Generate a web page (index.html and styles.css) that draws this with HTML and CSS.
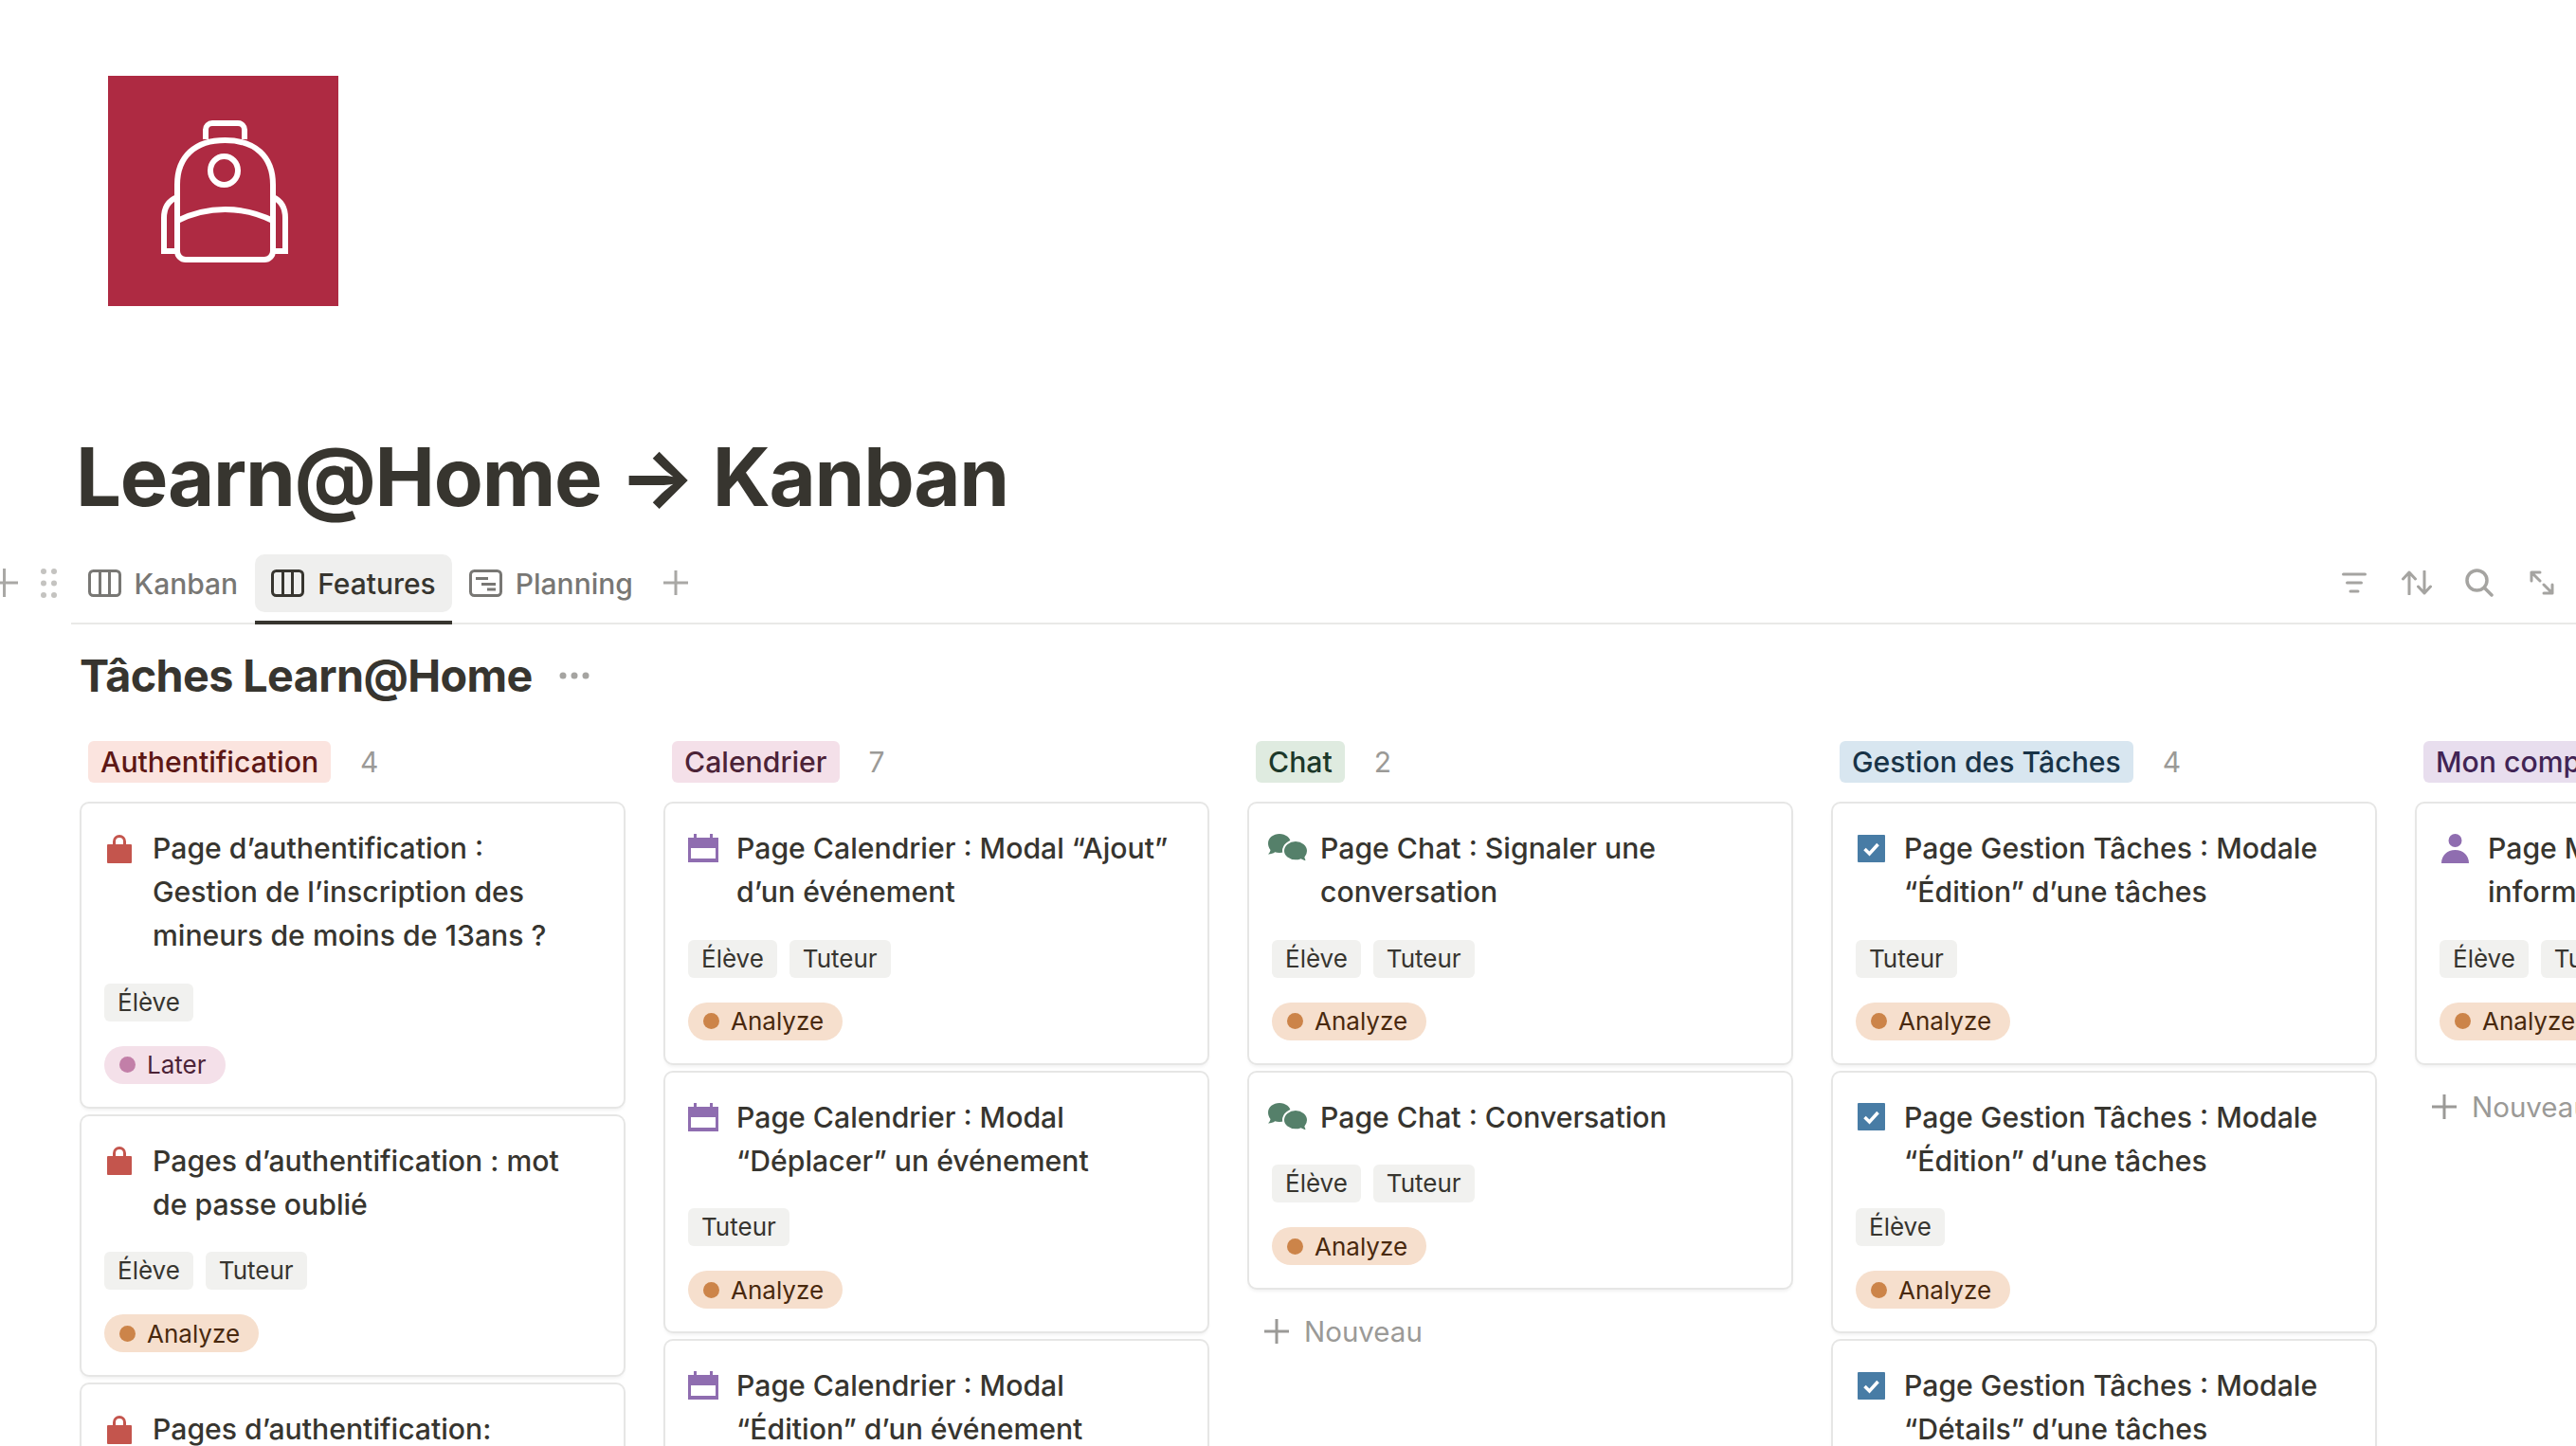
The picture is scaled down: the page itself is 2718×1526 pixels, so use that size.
FILE: index.html
```html
<!DOCTYPE html>
<html lang="fr">
    <head>
        <meta charset="UTF-8">
        <title>Learn@Home → Kanban</title>
        <link rel="stylesheet" href="styles.css">
    </head>
    <body>
        <svg class="sprites" width="0" height="0">
            <symbol id="i-board" viewBox="0 0 35 29"><rect x="1.5" y="1.5" width="32" height="26" rx="4" fill="none" stroke="currentColor" stroke-width="3"/><path d="M12.5 2V27M22.5 2V27" stroke="currentColor" stroke-width="3"/></symbol>
            <symbol id="i-timeline" viewBox="0 0 35 29"><rect x="1.5" y="1.5" width="32" height="26" rx="4" fill="none" stroke="currentColor" stroke-width="3"/><path d="M7 9.5H20M13 15.5H28M19 21H28" stroke="currentColor" stroke-width="3"/></symbol>
            <symbol id="i-lock" viewBox="0 0 26 31"><path d="M7.5 12V8a5.5 5.5 0 0 1 11 0v4" fill="none" stroke="currentColor" stroke-width="3"/><rect y="11" width="26" height="20" rx="1" fill="currentColor"/></symbol>
            <symbol id="i-cal" viewBox="0 0 32 30"><path d="M6 0h3v4h14V0h3v4h6v26H0V4h6zM3 15v11h26V15z" fill="currentColor"/></symbol>
            <symbol id="i-chat" viewBox="0 0 43 30"><path d="M12 0c6.500 0 12 4.300 12 10s-5.500 10-12 10c-1.800 0-3.300-.3-4.800-.8C5.500 20.500 3 21.300 0 21.500c1.300-1.200 2.200-2.600 2.500-4.500C1 15.200 0 12.800 0 10 0 4.300 5.500 0 12 0z" fill="currentColor"/><path d="M29 7c7 0 13 4.800 13 11 0 2.700-1 5-2.600 6.800.3 1.800 1.400 3.500 3.100 4.700-3 0-5.900-.8-8-2.100-1.700.6-3.500.9-5.500.9-7 0-13-4.600-13-10.300C16 11.800 22 7 29 7z" fill="currentColor" stroke="#fff" stroke-width="2"/></symbol>
            <symbol id="i-check" viewBox="0 0 29 29"><rect width="29" height="29" rx="1" fill="currentColor"/><path d="M7.500 15l5 5 9-10" fill="none" stroke="#fff" stroke-width="3.500"/></symbol>
            <symbol id="i-person" viewBox="0 0 29 31"><circle cx="14.500" cy="7" r="7" fill="currentColor"/><path d="M0 31c0-8 6-14 14.500-14S29 23 29 31z" fill="currentColor"/></symbol>
            <symbol id="i-plus" viewBox="0 0 26 26"><path d="M13 0V26M0 13H26" stroke="currentColor" stroke-width="3"/></symbol>
        </svg>

        <div class="page-icon">
            <svg width="243" height="242" viewBox="0 0 243 242" fill="none" stroke="#fff" stroke-width="6">
                <path d="M103 67V57a7 7 0 0 1 7-7H137a7 7 0 0 1 7 7V67"/>
                <path d="M73 185V115C73 85 92 68 123.500 68S174 85 174 115V185a9 9 0 0 1-9 9H82a9 9 0 0 1-9-9Z"/>
                <ellipse cx="122.500" cy="100" rx="14.500" ry="15"/>
                <path d="M73 128C63 132 59 140 59 150V185H71M174 128C183 132 187 140 187 150V185H176"/>
                <path d="M73 153C105 137 142 137 174 153"/>
            </svg>
        </div>

        <h1 class="page-title">Learn@Home → Kanban</h1>

        <div class="tabs-row">
            <div class="gutter">
                <svg class="gutter-plus" width="26" height="30" viewBox="0 0 26 30"><path d="M11.500 0V30M-4 15H26" stroke="currentColor" stroke-width="3"/></svg>
                <svg class="grip" width="17" height="32" viewBox="0 0 17 32" fill="currentColor"><circle cx="3" cy="3" r="3"/><circle cx="14" cy="3" r="3"/><circle cx="3" cy="15.500" r="3"/><circle cx="14" cy="15.500" r="3"/><circle cx="3" cy="28" r="3"/><circle cx="14" cy="28" r="3"/></svg>
            </div>
            <div class="tabs">
                <div class="tab"><div class="tab-inner"><svg width="35" height="29"><use href="#i-board"/></svg>Kanban</div></div>
                <div class="tab active"><div class="tab-inner"><svg width="35" height="29"><use href="#i-board"/></svg>Features</div></div>
                <div class="tab"><div class="tab-inner"><svg width="35" height="29"><use href="#i-timeline"/></svg>Planning</div></div>
                <svg class="tab-add" width="26" height="26"><use href="#i-plus"/></svg>
                <div class="tools">
                    <span class="tool"><svg width="26" height="22" viewBox="0 0 26 22" stroke="currentColor" stroke-width="3" stroke-linecap="round"><path d="M1.500 2H24.500M5.500 11H20.500M9 20H17"/></svg></span>
                    <span class="tool"><svg width="32" height="26" viewBox="0 0 32 26" fill="none" stroke="currentColor" stroke-width="3" stroke-linecap="round" stroke-linejoin="round"><path d="M8 25V2M1.500 9L8 2L14.500 9M24 1V24M17.500 17L24 24L30.500 17"/></svg></span>
                    <span class="tool"><svg width="30" height="30" viewBox="0 0 30 30" fill="none" stroke="currentColor" stroke-width="3.500" stroke-linecap="round"><circle cx="12.500" cy="12.500" r="10.500"/><path d="M20.500 20.500L28 28"/></svg></span>
                    <span class="tool"><svg width="26" height="26" viewBox="0 0 26 26" fill="none" stroke="currentColor" stroke-width="3" stroke-linecap="round" stroke-linejoin="round"><path d="M2 11V2H11M2 2L11 11M24 15V24H15M24 24L15 15"/></svg></span>
                </div>
            </div>
        </div>

        <div class="db-head">
            <h2>Tâches Learn@Home</h2>
            <svg class="db-more" width="32" height="8" viewBox="0 0 32 8" fill="currentColor"><circle cx="4" cy="4" r="3.500"/><circle cx="16" cy="4" r="3.500"/><circle cx="28" cy="4" r="3.500"/></svg>
        </div>

        <div class="board">
            <div class="column">
                <div class="col-head"><span class="col-label red">Authentification</span><span class="col-count">4</span></div>
                <div class="card">
                    <div class="card-title"><span class="card-icon c-red lock"><svg width="26" height="31"><use href="#i-lock"/></svg></span><span>Page d’authentification : Gestion de l’inscription des mineurs de moins de 13ans ?</span></div>
                    <div class="tags"><span class="tag">Élève</span></div>
                    <div class="status later"><i></i>Later</div>
                </div>
                <div class="card">
                    <div class="card-title"><span class="card-icon c-red lock"><svg width="26" height="31"><use href="#i-lock"/></svg></span><span>Pages d’authentification : mot de passe oublié</span></div>
                    <div class="tags"><span class="tag">Élève</span><span class="tag">Tuteur</span></div>
                    <div class="status analyze"><i></i>Analyze</div>
                </div>
                <div class="card">
                    <div class="card-title"><span class="card-icon c-red lock"><svg width="26" height="31"><use href="#i-lock"/></svg></span><span>Pages d’authentification:</span></div>
                </div>
            </div>

            <div class="column">
                <div class="col-head"><span class="col-label pink">Calendrier</span><span class="col-count">7</span></div>
                <div class="card">
                    <div class="card-title"><span class="card-icon c-purple"><svg width="32" height="30"><use href="#i-cal"/></svg></span><span>Page Calendrier : Modal “Ajout” d’un événement</span></div>
                    <div class="tags"><span class="tag">Élève</span><span class="tag">Tuteur</span></div>
                    <div class="status analyze"><i></i>Analyze</div>
                </div>
                <div class="card">
                    <div class="card-title"><span class="card-icon c-purple"><svg width="32" height="30"><use href="#i-cal"/></svg></span><span>Page Calendrier : Modal “Déplacer” un événement</span></div>
                    <div class="tags"><span class="tag">Tuteur</span></div>
                    <div class="status analyze"><i></i>Analyze</div>
                </div>
                <div class="card">
                    <div class="card-title"><span class="card-icon c-purple"><svg width="32" height="30"><use href="#i-cal"/></svg></span><span>Page Calendrier : Modal “Édition” d’un événement</span></div>
                </div>
            </div>

            <div class="column">
                <div class="col-head"><span class="col-label green">Chat</span><span class="col-count">2</span></div>
                <div class="card">
                    <div class="card-title"><span class="card-icon c-green chat"><svg width="43" height="30"><use href="#i-chat"/></svg></span><span>Page Chat : Signaler une conversation</span></div>
                    <div class="tags"><span class="tag">Élève</span><span class="tag">Tuteur</span></div>
                    <div class="status analyze"><i></i>Analyze</div>
                </div>
                <div class="card">
                    <div class="card-title"><span class="card-icon c-green chat"><svg width="43" height="30"><use href="#i-chat"/></svg></span><span>Page Chat : Conversation</span></div>
                    <div class="tags"><span class="tag">Élève</span><span class="tag">Tuteur</span></div>
                    <div class="status analyze"><i></i>Analyze</div>
                </div>
                <div class="add-new"><svg width="26" height="26"><use href="#i-plus"/></svg>Nouveau</div>
            </div>

            <div class="column">
                <div class="col-head"><span class="col-label blue">Gestion des Tâches</span><span class="col-count">4</span></div>
                <div class="card">
                    <div class="card-title"><span class="card-icon c-blue check"><svg width="29" height="29"><use href="#i-check"/></svg></span><span>Page Gestion Tâches : Modale “Édition” d’une tâches</span></div>
                    <div class="tags"><span class="tag">Tuteur</span></div>
                    <div class="status analyze"><i></i>Analyze</div>
                </div>
                <div class="card">
                    <div class="card-title"><span class="card-icon c-blue check"><svg width="29" height="29"><use href="#i-check"/></svg></span><span>Page Gestion Tâches : Modale “Édition” d’une tâches</span></div>
                    <div class="tags"><span class="tag">Élève</span></div>
                    <div class="status analyze"><i></i>Analyze</div>
                </div>
                <div class="card">
                    <div class="card-title"><span class="card-icon c-blue check"><svg width="29" height="29"><use href="#i-check"/></svg></span><span>Page Gestion Tâches : Modale “Détails” d’une tâches</span></div>
                </div>
            </div>

            <div class="column">
                <div class="col-head"><span class="col-label violet">Mon compte</span><span class="col-count">1</span></div>
                <div class="card">
                    <div class="card-title"><span class="card-icon c-purple person"><svg width="29" height="31"><use href="#i-person"/></svg></span><span>Page Mon compte : Mes informations</span></div>
                    <div class="tags"><span class="tag">Élève</span><span class="tag">Tuteur</span></div>
                    <div class="status analyze"><i></i>Analyze</div>
                </div>
                <div class="add-new"><svg width="26" height="26"><use href="#i-plus"/></svg>Nouveau</div>
            </div>
        </div>
    </body>
</html>
```

FILE: styles.css
```css
html, body {
    margin: 0;
    height: 100%;
    overflow: hidden;
}
body {
    font-family: 'Inter', 'Liberation Sans', sans-serif;
    color: #37352f;
    background-color: #ffffff;
}
.sprites {
    display: block;
    height: 0;
}

/* page header */
.page-icon {
    width: 243px;
    height: 243px;
    margin: 80px 0 0 114px;
    background-color: #ae2a42;
}
.page-icon svg {
    display: block;
}
.page-title {
    margin: 138px 0 0 80px;
    font-size: 85px;
    line-height: 86px;
    font-weight: 700;
    letter-spacing: -1.3px;
    white-space: nowrap;
}

/* tabs */
.tabs-row {
    display: flex;
    margin-top: 38px;
}
.gutter {
    width: 75px;
    flex-shrink: 0;
    display: flex;
    align-items: flex-start;
    color: #c4c3c0;
    padding-top: 15px;
    box-sizing: border-box;
    overflow: hidden;
}
.gutter-plus {
    color: #a9a8a5;
    margin-left: -7px;
}
.grip {
    margin-left: 24px;
}
.tabs {
    flex: 1;
    display: flex;
    align-items: flex-start;
    border-bottom: 2px solid #e9e9e7;
    height: 72px;
}
.tab {
    padding-bottom: 9px;
    height: 74px;
    box-sizing: border-box;
    color: #787774;
}
.tab-inner {
    display: flex;
    align-items: center;
    gap: 14px;
    height: 61px;
    padding: 0 17.5px;
    font-size: 30px;
    font-weight: 500;
    border-radius: 10px;
}
.tab.active {
    color: #37352f;
    border-bottom: 4px solid #37352f;
}
.tab.active .tab-inner {
    background-color: #efefee;
}
.tab-add {
    margin: 17px 0 0 15px;
    color: #a9a8a5;
}
.tools {
    margin-left: auto;
    padding: 15px 3px 0 0;
    display: flex;
    color: #a5a4a1;
}
.tool {
    width: 66px;
    height: 30px;
    display: flex;
    align-items: center;
    justify-content: center;
}

/* database title */
.db-head {
    display: flex;
    align-items: center;
    gap: 28px;
    margin: 27.5px 0 0 84px;
    height: 52px;
}
.db-head h2 {
    margin: 0;
    font-size: 46.7px;
    font-weight: 700;
    letter-spacing: -.6px;
}
.db-more {
    color: #a5a4a1;
}

/* board */
.board {
    display: flex;
    gap: 42px;
    margin: 43.5px 0 0 85px;
}
.column {
    width: 574px;
    flex-shrink: 0;
}
.col-head {
    display: flex;
    align-items: center;
    gap: 31px;
    height: 44px;
    margin: 0 0 22px 8px;
}
.col-label {
    height: 44px;
    line-height: 45px;
    padding: 0 13px;
    font-size: 30.2px;
    font-weight: 500;
    border-radius: 6px;
    white-space: nowrap;
}
.col-count {
    font-size: 30px;
    color: #9b9a97;
}
.red { background-color: #fbe4df; color: #5d1715; }
.pink { background-color: #f4e0e9; color: #4c2337; }
.green { background-color: #dfebe0; color: #1c3829; }
.blue { background-color: #d8e6f0; color: #183347; }
.violet { background-color: #e8deee; color: #412454; }

.card {
    box-sizing: border-box;
    margin-bottom: 10px;
    padding: 24px 37px 24px 24px;
    border-radius: 8px;
    background-color: #ffffff;
    box-shadow: 0 0 0 2px #e6e6e5, 0 3px 4px rgba(15, 15, 15, .08);
    margin-left: 1px;
    width: 572px;
}
.card-title {
    display: flex;
    font-size: 30.2px;
    line-height: 46px;
    font-weight: 500;
}
.card-icon {
    width: 51px;
    height: 46px;
    flex-shrink: 0;
    display: flex;
    align-items: center;
}
.card-icon.lock { padding-left: 3px; width: 48px; }
.card-icon.chat { margin-left: -4px; width: 55px; }
.card-icon.check { padding-left: 2px; width: 49px; }
.card-icon.person { padding-left: 2px; width: 49px; }
.c-red { color: #c4554d; }
.c-purple { color: #8f6db0; }
.c-green { color: #55806a; }
.c-blue { color: #487ca5; }

.tags {
    display: flex;
    gap: 13px;
    margin-top: 27.5px;
}
.tag {
    height: 40px;
    line-height: 40px;
    padding: 0 14px;
    font-size: 26px;
    background-color: #f1f1ef;
    border-radius: 6px;
}
.status {
    display: inline-flex;
    align-items: center;
    gap: 12px;
    height: 40px;
    margin-top: 26px;
    padding: 0 20px 0 16px;
    font-size: 26px;
    border-radius: 20px;
    vertical-align: top;
}
.status i {
    width: 17px;
    height: 17px;
    border-radius: 50%;
}
.status.analyze { background-color: #f6dfcd; color: #49290e; }
.status.analyze i { background-color: #cc8449; }
.status.later { background-color: #f4e0e9; color: #4c2337; }
.status.later i { background-color: #c27fa8; }

.add-new {
    display: flex;
    align-items: center;
    gap: 16px;
    margin: 23px 0 0 17px;
    height: 46px;
    font-size: 29.5px;
    color: #9b9a97;
}
```
